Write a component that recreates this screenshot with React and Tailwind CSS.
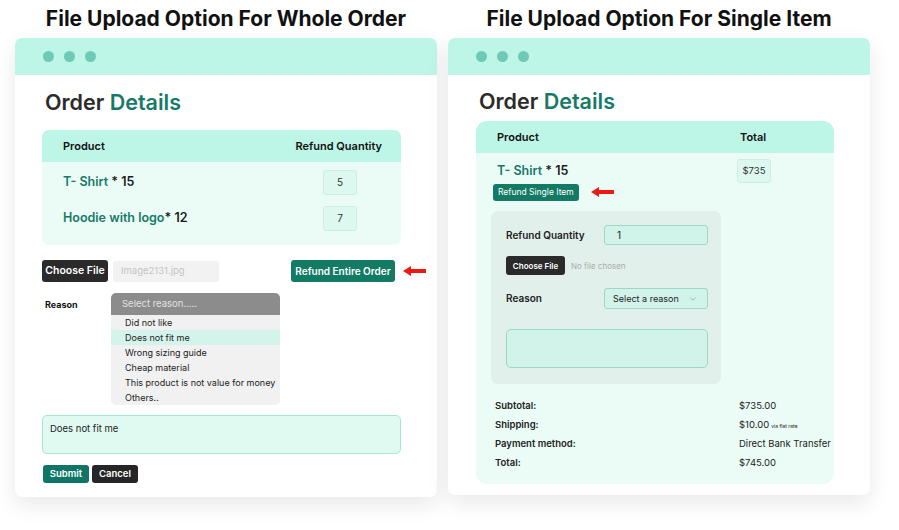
import React from "react";
import { ChevronDown } from "lucide-react";

const font = { fontFamily: "Inter, 'Open Sans', sans-serif" };

function Dots() {
  return (
    <div className="h-[37px] bg-[#bdf5e6] rounded-t-[7px] flex items-center gap-[10px] pl-[28px]">
      <span className="w-[11px] h-[11px] rounded-full bg-[#6ec9b7]" />
      <span className="w-[11px] h-[11px] rounded-full bg-[#6ec9b7]" />
      <span className="w-[11px] h-[11px] rounded-full bg-[#6ec9b7]" />
    </div>
  );
}

function RedArrow() {
  return (
    <svg width="23" height="10" viewBox="0 0 23 10">
      <polygon points="0,5 8,0 8,3 23,3 23,7 8,7 8,10" fill="#ec1a12" />
    </svg>
  );
}

function Title({ children }) {
  return (
    <div className="h-[32px] mb-[4px] flex items-center justify-center text-[21px] font-bold text-[#111] leading-none">
      {children}
    </div>
  );
}

function OrderTitle() {
  return (
    <div className="text-[21.5px] font-semibold text-[#2b2b2b] leading-[26px]">
      Order <span className="text-[#177a68]">Details</span>
    </div>
  );
}

const reasons = [
  "Did not like",
  "Does not fit me",
  "Wrong sizing guide",
  "Cheap material",
  "This product is not value for money",
  "Others..",
];

function WholeOrder() {
  return (
    <div className="w-[422px] flex flex-col">
      <Title>File Upload Option For Whole Order</Title>
      <div className="h-[459px] bg-white rounded-[7px] shadow-[0_8px_22px_rgba(0,0,0,0.09)] flex flex-col">
        <Dots />
        <div className="pl-[27px] pr-[36px] pt-[14px] flex flex-col">
          <div className="pl-[3px]">
            <OrderTitle />
          </div>

          <div className="mt-[15px] rounded-[7px] overflow-hidden bg-[#ebfcf6]">
            <div className="h-[32px] bg-[#bdf5e6] flex items-center justify-between pl-[21px] pr-[19px] text-[11px] font-semibold text-[#111]">
              <span>Product</span>
              <span>Refund Quantity</span>
            </div>
            <div className="pt-[8px] pb-[14px] flex flex-col gap-[11px]">
              {[
                ["T- Shirt", " * 15", "5"],
                ["Hoodie with logo", "* 12", "7"],
              ].map(([name, qty, val]) => (
                <div key={name} className="flex items-center justify-between pl-[21px] pr-[44px] h-[25px]">
                  <span className="text-[12.5px] font-semibold text-[#1b1b1b] whitespace-pre">
                    <span className="text-[#177a68]">{name}</span>
                    {qty}
                  </span>
                  <span className="w-[34px] h-[25px] rounded-[3px] bg-[#dcf8ef] border border-[#cdeee4] flex items-center justify-center text-[10px] text-[#333]">
                    {val}
                  </span>
                </div>
              ))}
            </div>
          </div>

          <div className="mt-[15px] flex items-center">
            <button className="w-[66px] h-[22px] rounded-[3px] bg-[#2a2a2a] text-white text-[10.5px] font-semibold">
              Choose File
            </button>
            <div className="ml-[5px] w-[106px] h-[21px] rounded-[3px] bg-[#f2f2f2] flex items-center pl-[8px] text-[9.5px] text-[#c4c4c4]">
              Image2131.jpg
            </div>
            <div className="ml-auto mr-[6px] relative flex">
              <button className="w-[104px] h-[22px] rounded-[3px] bg-[#137a63] text-white text-[10px] font-semibold">
                Refund Entire Order
              </button>
              <div className="absolute left-[112px] top-[6px] flex">
                <RedArrow />
              </div>
            </div>
          </div>

          <div className="mt-[11px] flex items-start">
            <div className="w-[69px] pl-[3px] pt-[5px] text-[9px] font-bold text-[#111]">Reason</div>
            <div className="w-[169px] rounded-[5px] overflow-hidden bg-[#f1f1f1]">
              <div className="h-[22px] bg-[#8c8c8c] flex items-center pl-[11px] text-[9.5px] text-[#e2e2e2]">
                Select reason.....
              </div>
              <div>
                {reasons.map((r, i) => (
                  <div
                    key={r}
                    className={
                      "h-[15px] flex items-center pl-[14px] text-[9px] text-[#222] whitespace-nowrap " +
                      (i === 1 ? "bg-[#d4f3ea]" : "")
                    }
                  >
                    {r}
                  </div>
                ))}
              </div>
            </div>
          </div>

          <div className="mt-[10px] h-[39px] rounded-[5px] bg-[#e0faf2] border border-[#a9e4d4] pl-[7px] pt-[6px] text-[9.5px] text-[#222]">
            Does not fit me
          </div>

          <div className="mt-[11px] flex gap-[3px] pl-[1px]">
            <button className="w-[46px] h-[18px] rounded-[3px] bg-[#0f7566] text-white text-[9.5px] font-semibold">
              Submit
            </button>
            <button className="w-[46px] h-[18px] rounded-[3px] bg-[#262626] text-white text-[9.5px] font-semibold">
              Cancel
            </button>
          </div>
        </div>
      </div>
    </div>
  );
}

function SingleItem() {
  return (
    <div className="w-[422px] flex flex-col">
      <Title>File Upload Option For Single Item</Title>
      <div className="h-[457px] bg-white rounded-[7px] shadow-[0_8px_22px_rgba(0,0,0,0.09)] flex flex-col">
        <Dots />
        <div className="pl-[28px] pr-[36px] pt-[13px] flex flex-col">
          <div className="pl-[3px]">
            <OrderTitle />
          </div>

          <div className="mt-[7px] rounded-[11px] overflow-hidden bg-[#ebfcf6]">
            <div className="h-[32px] bg-[#bdf5e6] flex items-center pl-[21px] text-[11px] font-semibold text-[#111]">
              <span className="flex-1">Product</span>
              <span className="w-[97px] pl-[3px]">Total</span>
            </div>

            <div className="flex pt-[6px]">
              <div className="flex-1 pl-[15px]">
                <div className="pl-[6px] h-[24px] flex items-center text-[12.5px] font-semibold text-[#1b1b1b]">
                  <span className="text-[#177a68]">T- Shirt</span>&nbsp;* 15
                </div>
                <div className="relative w-fit ml-[2px] mt-[1px] flex">
                  <button className="h-[17px] px-[5px] rounded-[3px] bg-[#137a63] text-white text-[8.5px]">
                    Refund Single Item
                  </button>
                  <div className="absolute left-[98px] top-[3px] flex">
                    <RedArrow />
                  </div>
                </div>
              </div>
              <div className="w-[97px]">
                <div className="w-[34px] h-[24px] rounded-[3px] bg-[#dcf8ef] border border-[#cdeee4] flex items-center justify-center text-[9.5px] text-[#333]">
                  $735
                </div>
              </div>
            </div>

            <div className="ml-[15px] mt-[10px] w-[230px] rounded-[7px] bg-[#e1f0ea] pl-[15px] pr-[13px] pt-[14px] pb-[16px] flex flex-col">
              <div className="flex items-center justify-between">
                <span className="text-[10px] font-semibold text-[#222]">Refund Quantity</span>
                <div className="w-[104px] h-[20px] rounded-[3px] bg-[#d2f3ea] border border-[#9bd8c6] flex items-center pl-[12px] text-[10px] text-[#222]">
                  1
                </div>
              </div>
              <div className="mt-[11px] flex items-center">
                <button className="w-[59px] h-[19px] rounded-[3px] bg-[#2a2a2a] text-white text-[8px] font-semibold">
                  Choose File
                </button>
                <span className="ml-[6px] text-[8px] text-[#aaa]">No file chosen</span>
              </div>
              <div className="mt-[13px] flex items-center justify-between">
                <span className="text-[10px] font-semibold text-[#222]">Reason</span>
                <div className="w-[104px] h-[21px] rounded-[3px] bg-[#d2f3ea] border border-[#9bd8c6] flex items-center justify-between pl-[8px] pr-[9px] text-[9px] text-[#222]">
                  Select a reason
                  <ChevronDown size={10} strokeWidth={1.5} color="#5aa596" />
                </div>
              </div>
              <div className="mt-[20px] h-[39px] rounded-[5px] bg-[#d2f3ea] border border-[#9bd8c6]" />
            </div>

            <div className="pt-[13px] pb-[11px] pl-[19px] flex flex-col text-[9.5px] text-[#222]">
              {[
                ["Subtotal:", "$735.00", null],
                ["Shipping:", "$10.00", "via flat rate"],
                ["Payment method:", "Direct Bank Transfer", null],
                ["Total:", "$745.00", null],
              ].map(([label, value, note]) => (
                <div key={label} className="h-[19px] flex items-center">
                  <span className="flex-1 font-semibold">{label}</span>
                  <span className="w-[95px] whitespace-nowrap">
                    {value}
                    {note && <span className="text-[5px] ml-[2px]">{note}</span>}
                  </span>
                </div>
              ))}
            </div>
          </div>
        </div>
      </div>
    </div>
  );
}

export default function App() {
  return (
    <div style={font} className="w-[899px] h-[530px] bg-white flex gap-[11px] pl-[15px] pt-[2px] overflow-hidden">
      <WholeOrder />
      <SingleItem />
    </div>
  );
}
